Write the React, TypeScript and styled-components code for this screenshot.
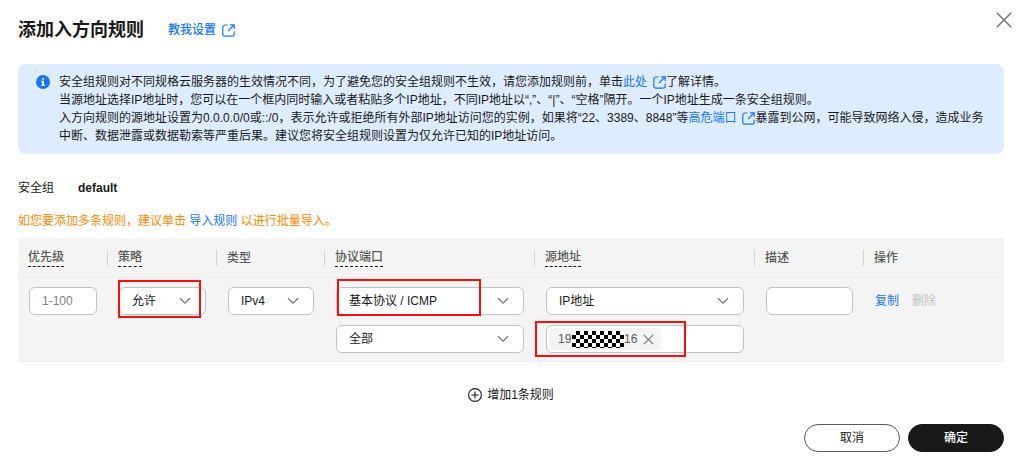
import React from 'react';
import styled, { createGlobalStyle, css } from 'styled-components';

const BLUE = '#1476ff';
const INK = '#191919';
const FONT = '"Liberation Sans", "Noto Sans CJK SC", sans-serif';

const GlobalStyle = createGlobalStyle`
  *, *::before, *::after { box-sizing: border-box; }
  body {
    margin: 0;
    background: #fff;
    color: ${INK};
    font: 12px/18px ${FONT};
    text-spacing-trim: space-all;
  }
  button, input, select { font: inherit; color: inherit; }
`;

const Dialog = styled.main`
  padding: 8px 25px 8px 18px;
`;

const Header = styled.header`
  display: flex;
  align-items: center;
  height: 44px;
`;

const Title = styled.h1`
  margin: 0 24px 0 0;
  font-size: 18px;
  line-height: 24px;
  font-weight: 700;
`;

const Link = styled.a<{ $strong?: boolean }>`
  color: ${BLUE};
  text-decoration: none;
  font-weight: ${p => (p.$strong ? 500 : 400)};
  svg {
    margin-left: 6px;
    vertical-align: -3px;
  }
`;

const CloseButton = styled.button`
  align-self: flex-start;
  display: grid;
  place-items: center;
  width: 24px;
  height: 24px;
  margin: 0 -12px 0 auto;
  padding: 0;
  border: 0;
  background: none;
  color: #777;
`;

const Notice = styled.section`
  display: flex;
  gap: 9px;
  margin-top: 12px;
  padding: 9px 16px 9px 18px;
  border-radius: 8px;
  background: #deecff;
  > svg {
    flex: none;
    margin-top: 2px;
  }
`;

const NoticeText = styled.div`
  flex: 1;
  min-width: 0;
  p { margin: 0; }
`;

const Group = styled.dl`
  display: flex;
  gap: 24px;
  margin: 25px 0 0;
  dt { color: ${INK}; }
  dd { margin: 0; font-weight: 700; }
`;

const Tip = styled.p`
  margin: 15px 0 8px;
  color: #ff8800;
`;

const Table = styled.table`
  width: 100%;
  table-layout: fixed;
  border-collapse: separate;
  border-spacing: 0;
  background: #f4f4f4;
`;

const Th = styled.th`
  height: 40px;
  padding: 0;
  border-bottom: 1px solid #ececec;
  color: #595959;
  font-weight: 500;
  text-align: left;
  > div {
    display: flex;
    align-items: center;
    height: 16px;
    padding-left: 10px;
    border-right: 1px solid #d4d4d4;
  }
  &:last-child > div { border-right: 0; }
`;

const Hint = styled.span`
  line-height: 17px;
  border-bottom: 1px dashed ${INK};
`;

const Td = styled.td`
  padding: 9px 11px 8px;
  border-bottom: 1px solid #ececec;
  vertical-align: top;
`;

const Stack = styled.div`
  display: grid;
  grid-template-columns: minmax(0, 1fr);
  gap: 10px;
`;

const Field = styled.div`
  position: relative;
  > svg {
    position: absolute;
    right: 15px;
    top: 10px;
    pointer-events: none;
  }
`;

const box = css`
  display: block;
  width: 100%;
  height: 28px;
  border: 1px solid #c2c2c2;
  border-radius: 6px;
  background: #fff;
`;

const Select = styled.select`
  ${box}
  appearance: none;
  padding: 0 12px;
`;

const Input = styled.input`
  ${box}
  padding: 0 12px;
  &::placeholder { color: #808080; opacity: 1; }
`;

const TagBox = styled.div`
  ${box}
  display: flex;
  align-items: center;
  padding: 0 2px;
`;

const TagInput = styled.input`
  flex: 1;
  width: 0;
  min-width: 0;
  padding: 0;
  border: 0;
  outline: 0;
  background: none;
`;

const Tag = styled.span`
  display: flex;
  flex: none;
  align-items: center;
  height: 22px;
  padding: 0 7px 0 9px;
  border-radius: 4px;
  background: #f4f4f4;
  color: #595959;
`;

const TagRemove = styled.button`
  display: flex;
  margin-left: 6px;
  padding: 0;
  border: 0;
  background: none;
  color: #777;
`;

const Masked = styled.span`
  width: 52px;
  height: 17px;
  margin-left: -6px;
  background: repeating-conic-gradient(#000 0 25%, #fff 0 50%) 0 0 / 8px 8px;
`;

const Highlight = styled.span<{ $x: number; $y: number; $w: number; $h: number }>`
  position: absolute;
  left: ${p => p.$x}px;
  top: ${p => p.$y}px;
  width: ${p => p.$w}px;
  height: ${p => p.$h}px;
  border: 2px solid #f80f10;
  pointer-events: none;
`;

const RowActions = styled.div`
  display: flex;
  gap: 13px;
  padding-top: 5px;
  white-space: nowrap;
`;

const TextButton = styled.button`
  padding: 0;
  border: 0;
  background: none;
  color: ${BLUE};
  &:disabled { color: #c2c2c2; }
`;

const AddButton = styled.button`
  display: flex;
  align-items: center;
  gap: 5px;
  margin: 24px auto 0;
  padding: 0;
  border: 0;
  background: none;
`;

const Footer = styled.footer`
  display: flex;
  justify-content: flex-end;
  gap: 8px;
  margin-top: 20px;
`;

const Button = styled.button<{ $primary?: boolean }>`
  width: 96px;
  height: 28px;
  padding: 0;
  border: 1px solid ${p => (p.$primary ? INK : '#595959')};
  border-radius: 14px;
  background: ${p => (p.$primary ? INK : '#fff')};
  color: ${p => (p.$primary ? '#fff' : INK)};
  font-weight: ${p => (p.$primary ? 500 : 400)};
`;

const ExternalIcon = () => (
  <svg width="13" height="13" viewBox="0 0 13 13" fill="none" stroke="currentColor" strokeWidth="1.2" aria-hidden>
    <path d="M5.5 1H3a2.2 2.2 0 0 0-2.2 2.2V10A2.2 2.2 0 0 0 3 12.2h7a2.2 2.2 0 0 0 2.2-2.2V7.5M8 .8h4.2V5M12 1 6 7" />
  </svg>
);

const InfoIcon = () => (
  <svg width="14" height="14" viewBox="0 0 14 14" aria-hidden>
    <circle cx="7" cy="7" r="7" fill={BLUE} />
    <path d="M6 3h2v1.6H6zM5.2 5.8H8v4h1V11H5.2V9.8h1V7h-1z" fill="#fff" />
  </svg>
);

const CrossIcon = ({ size }: { size: number }) => (
  <svg width={size} height={size} viewBox={`0 0 ${size} ${size}`} fill="none" stroke="currentColor" strokeWidth={size > 12 ? 1.6 : 1.2} aria-hidden>
    <path d={`M.8 .8 ${size - 0.8} ${size - 0.8}M${size - 0.8} .8 .8 ${size - 0.8}`} />
  </svg>
);

const Chevron = () => (
  <svg width="12" height="8" viewBox="0 0 12 8" fill="none" stroke="#777" strokeWidth="1.3" aria-hidden>
    <path d="M1 1.2 6 6.2l5-5" />
  </svg>
);

const PlusIcon = () => (
  <svg width="14" height="14" viewBox="0 0 14 14" fill="none" stroke="currentColor" strokeWidth="1.1" aria-hidden>
    <circle cx="7" cy="7" r="6.4" />
    <path d="M7 3.4v7.2M3.4 7h7.2" />
  </svg>
);

const columns = [
  { label: '优先级', width: 90, hint: true },
  { label: '策略', width: 109, hint: true },
  { label: '类型', width: 108 },
  { label: '协议端口', width: 210, hint: true },
  { label: '源地址', width: 220, hint: true },
  { label: '描述', width: 109 },
  { label: '操作', width: 140 },
];

type DropProps = { label: string; options: string[]; children?: React.ReactNode };

const Dropdown = ({ label, options, children }: DropProps) => (
  <Field>
    <Select aria-label={label}>
      {options.map(o => <option key={o}>{o}</option>)}
    </Select>
    <Chevron />
    {children}
  </Field>
);

export default function App() {
  return (
    <>
      <GlobalStyle />
      <Dialog lang="zh-CN">
        <Header>
          <Title>添加入方向规则</Title>
          <Link href="#guide" $strong>教我设置<ExternalIcon /></Link>
          <CloseButton aria-label="关闭"><CrossIcon size={16} /></CloseButton>
        </Header>

        <Notice>
          <InfoIcon />
          <NoticeText>
            <p>安全组规则对不同规格云服务器的生效情况不同，为了避免您的安全组规则不生效，请您添加规则前，单击<Link href="#detail">此处<ExternalIcon /></Link>了解详情。</p>
            <p>当源地址选择IP地址时，您可以在一个框内同时输入或者粘贴多个IP地址，不同IP地址以“,”、“|”、“空格”隔开。一个IP地址生成一条安全组规则。</p>
            <p>入方向规则的源地址设置为0.0.0.0/0或::/0，表示允许或拒绝所有外部IP地址访问您的实例，如果将“22、3389、8848”等<Link href="#ports">高危端口<ExternalIcon /></Link>暴露到公网，可能导致网络入侵，造成业务中断、数据泄露或数据勒索等严重后果。建议您将安全组规则设置为仅允许已知的IP地址访问。</p>
          </NoticeText>
        </Notice>

        <Group>
          <dt>安全组</dt>
          <dd>default</dd>
        </Group>

        <Tip>如您要添加多条规则，建议单击 <Link href="#import">导入规则</Link> 以进行批量导入。</Tip>

        <Table>
          <colgroup>
            {columns.map(c => <col key={c.label} width={c.width} />)}
          </colgroup>
          <thead>
            <tr>
              {columns.map(c => (
                <Th key={c.label} scope="col">
                  <div>{c.hint ? <Hint>{c.label}</Hint> : c.label}</div>
                </Th>
              ))}
            </tr>
          </thead>
          <tbody>
            <tr>
              <Td><Input aria-label="优先级" placeholder="1-100" /></Td>
              <Td>
                <Dropdown label="策略" options={['允许', '拒绝']}>
                  <Highlight $x={-1} $y={-7} $w={83} $h={38} />
                </Dropdown>
              </Td>
              <Td><Dropdown label="类型" options={['IPv4', 'IPv6']} /></Td>
              <Td>
                <Stack>
                  <Dropdown label="协议" options={['基本协议 / ICMP']}>
                    <Highlight $x={1} $y={-8} $w={144} $h={37} />
                  </Dropdown>
                  <Dropdown label="端口" options={['全部']} />
                </Stack>
              </Td>
              <Td>
                <Stack>
                  <Dropdown label="源地址类型" options={['IP地址']} />
                  <Field>
                    <TagBox>
                      <Tag>
                        192<Masked />16
                        <TagRemove aria-label="移除"><CrossIcon size={11} /></TagRemove>
                      </Tag>
                      <TagInput aria-label="源地址" />
                    </TagBox>
                    <Highlight $x={-11} $y={-4} $w={151} $h={36} />
                  </Field>
                </Stack>
              </Td>
              <Td><Input aria-label="描述" /></Td>
              <Td>
                <RowActions>
                  <TextButton>复制</TextButton>
                  <TextButton disabled>删除</TextButton>
                </RowActions>
              </Td>
            </tr>
          </tbody>
        </Table>

        <AddButton><PlusIcon />增加1条规则</AddButton>

        <Footer>
          <Button>取消</Button>
          <Button $primary>确定</Button>
        </Footer>
      </Dialog>
    </>
  );
}
